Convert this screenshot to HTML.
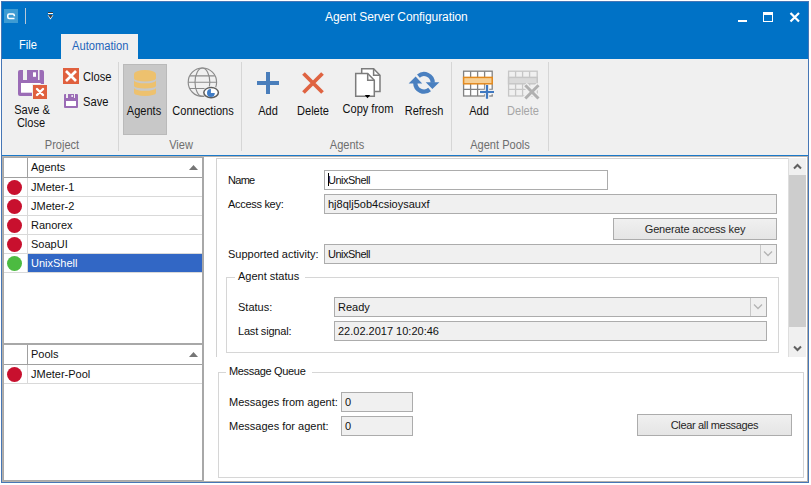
<!DOCTYPE html>
<html><head><meta charset="utf-8">
<style>
*{margin:0;padding:0;box-sizing:border-box}
html,body{width:811px;height:485px;overflow:hidden;background:#fff;font-family:"Liberation Sans",sans-serif;}
.a{position:absolute}
.t{position:absolute;white-space:nowrap;font-size:11px;line-height:13px;color:#111}
.c{position:absolute;white-space:nowrap;font-size:12px;line-height:13px;color:#111;width:120px;text-align:center;transform:scaleX(0.92)}
.r{font-size:12px;transform:scaleX(0.93);transform-origin:0 0}
.g{color:#6e6e6e}
.sep{position:absolute;width:1px;top:62px;height:89px;background:#d6d6d6}
.box{position:absolute;border:1px solid #acacac;background:#f0f0f0}
.btn{position:absolute;border:1px solid #acacac;background:linear-gradient(#f0f0f0,#e5e5e5);text-align:center;font-size:11px;line-height:21px;color:#262626}
.hl{position:absolute;background:#d9d9d9}
.vl{position:absolute;background:#d9d9d9;width:1px}
.dot{position:absolute;width:15px;height:15px;border-radius:50%;background:#c8102e;left:7px}
</style></head><body>
<!-- window frame -->
<div class="a" style="left:1px;top:1px;width:808px;height:482px;background:#0072c6;border:1px solid #4676b5"></div>
<!-- title bar -->
<div class="a" style="left:4px;top:9px;width:14px;height:14px;background:#3d9bd3"></div>
<svg class="a" style="left:4px;top:9px" width="14" height="14"><path d="M10.3 7.2 V6.4 Q10.3 5 8.9 5 H5.2 Q3.8 5 3.8 6.4 V8.1 Q3.8 9.5 5.2 9.5 H10.5" fill="none" stroke="#fff" stroke-width="1.6"/></svg>
<div class="a" style="left:25px;top:8px;width:1px;height:16px;background:#b8c8d8"></div>
<svg class="a" style="left:47px;top:12px" width="8" height="9"><rect x="1" y="0" width="5" height="1" fill="#3a3a3a"/><rect x="1" y="1" width="5" height="1" fill="#fff"/><path d="M0.6 3 H6.4 L3.5 7.4Z" fill="#fff"/><path d="M1.2 3 H5.8 L3.5 6.2Z" fill="#3a3a3a"/></svg>
<div class="t" style="left:325px;top:10px;font-size:12px;line-height:14px;color:#fff;letter-spacing:-0.08px">Agent Server Configuration</div>
<div class="a" style="left:738px;top:20px;width:9px;height:2px;background:#fff"></div>
<div class="a" style="left:763px;top:12px;width:10px;height:10px;border:1px solid #fff;border-top-width:3px"></div>
<svg class="a" style="left:789px;top:12px" width="12" height="11"><path d="M1.5 1 L10 9.5 M10 1 L1.5 9.5" stroke="#fff" stroke-width="2.2"/></svg>
<!-- tabs -->
<div class="t r" style="left:19px;top:39px;color:#fff">File</div>
<div class="a" style="left:61px;top:34px;width:77px;height:25px;background:#f0f0f0"></div>
<div class="t r" style="left:72px;top:40px;color:#1e64ba">Automation</div>
<!-- ribbon -->
<div class="a" style="left:2px;top:59px;width:806px;height:96px;background:#f0f0f0"></div>
<div class="sep" style="left:118px"></div>
<div class="sep" style="left:241px"></div>
<div class="sep" style="left:451px"></div>
<div class="sep" style="left:548px"></div>

<!-- Save & Close icon -->
<svg class="a" style="left:18px;top:70px" width="30" height="30">
<rect x="0" y="0" width="26" height="26" rx="2" fill="#9b6cb6"/>
<rect x="5" y="0" width="4" height="10" fill="#f0f0f0"/>
<rect x="20" y="0" width="1.5" height="10" fill="#f0f0f0"/>
<rect x="15" y="2.3" width="3" height="4.5" fill="#fff"/>
<rect x="3" y="13" width="19.7" height="9.7" fill="#fff"/>
<rect x="14" y="14" width="16" height="16" fill="#f0f0f0"/>
<rect x="15" y="15" width="14" height="14" fill="#e0603e"/>
<path d="M19 19 L25 25 M25 19 L19 25" stroke="#fff" stroke-width="2.4" stroke-linecap="round"/>
</svg>
<div class="c" style="left:-28px;top:104px">Save &amp;</div>
<div class="c" style="left:-29px;top:117px">Close</div>
<!-- Close small -->
<svg class="a" style="left:63px;top:68px" width="16" height="16">
<rect width="16" height="16" fill="#e0603e"/>
<path d="M3 3 L13 13 M13 3 L3 13" stroke="#fff" stroke-width="2.7"/>
</svg>
<div class="t r" style="left:83px;top:71px">Close</div>
<!-- Save small -->
<svg class="a" style="left:64px;top:94px" width="14" height="14">
<rect width="14" height="14" rx="1" fill="#9b6cb6"/>
<rect x="2" y="0" width="2" height="4" fill="#f0f0f0"/>
<rect x="10" y="0" width="1" height="4" fill="#f0f0f0"/>
<rect x="7.5" y="1" width="1.3" height="2" fill="#fff"/>
<rect x="2" y="7" width="10" height="5" fill="#fff"/>
</svg>
<div class="t r" style="left:83px;top:96px">Save</div>
<div class="c g" style="left:2px;top:139px">Project</div>

<!-- Agents (selected) -->
<div class="a" style="left:123px;top:64px;width:44px;height:71px;background:#c8c8c8;border:1px solid #bababa"></div>
<svg class="a" style="left:134px;top:70px" width="22" height="26">
<path d="M0 4 A11 4 0 0 1 22 4 V8.5 A11 3 0 0 1 0 8.5 Z M0 10.3 A11 3 0 0 0 22 10.3 V16 A11 2.5 0 0 1 0 16 Z M0 17.8 A11 3 0 0 0 22 17.8 V23 A11 3 0 0 1 0 23 Z" fill="#edc16e"/>
</svg>
<div class="c" style="left:84px;top:105px">Agents</div>
<!-- Connections -->
<svg class="a" style="left:186px;top:66px" width="36" height="36">
<g fill="none" stroke="#8a8a8a" stroke-width="1.15">
<circle cx="16.4" cy="16.2" r="14.2"/>
<ellipse cx="16.4" cy="16.2" rx="7.4" ry="14.2"/>
<path d="M4 9.9 H28.8 M2.2 16.2 H30.6 M4 22.5 H28.8"/>
</g>
<ellipse cx="25.1" cy="26.6" rx="8.6" ry="6.4" fill="#f0f0f0"/>
<ellipse cx="25.1" cy="26.6" rx="7.3" ry="5.1" fill="#fff" stroke="#5e5e5e" stroke-width="1.5"/>
<path d="M24.9 27 V23.1 A3.9 3.9 0 1 0 28.8 27 Z" fill="#3f7cc6"/>
</svg>
<div class="c" style="left:143px;top:105px">Connections</div>
<div class="c g" style="left:121px;top:139px">View</div>

<!-- Add -->
<svg class="a" style="left:257px;top:72px" width="22" height="22"><path d="M11 0 V22 M0 11 H22" stroke="#4a7ebb" stroke-width="4"/></svg>
<div class="c" style="left:208px;top:105px">Add</div>
<!-- Delete -->
<svg class="a" style="left:302px;top:72px" width="22" height="22"><path d="M1.5 1.5 L20.5 20.5 M20.5 1.5 L1.5 20.5" stroke="#df6341" stroke-width="3.8"/></svg>
<div class="c" style="left:253px;top:105px">Delete</div>
<!-- Copy from -->
<svg class="a" style="left:354px;top:67px" width="28" height="32">
<path d="M7.7 1.7 H19.6 L26 8.2 V24.5 H7.7 Z" fill="#fff" stroke="#7c7c7c" stroke-width="1.5"/>
<path d="M19.6 1.7 V8.2 H26" fill="none" stroke="#7c7c7c" stroke-width="1.5"/>
<path d="M1.7 6.5 H13.7 L20.3 13.2 V29.2 H1.7 Z" fill="#fff" stroke="#7c7c7c" stroke-width="1.5"/>
<path d="M13.7 6.5 V13.2 H20.3" fill="none" stroke="#7c7c7c" stroke-width="1.5"/>
<path d="M10.8 28 H16.2 L13.5 31.2 Z" fill="#000"/>
</svg>
<div class="c" style="left:308px;top:103px">Copy from</div>
<!-- Refresh -->
<svg class="a" style="left:404px;top:66px" width="40" height="30">
<path d="M14.4 10.1 A8.7 8.7 0 0 1 28.7 16.8 M25.6 23.5 A8.7 8.7 0 0 1 11.3 16.8" fill="none" stroke="#4a80c0" stroke-width="4.3"/>
<path d="M21.7 16.3 H35.4 L28.4 23.1 Z M4.6 17.5 H18.2 L11.6 10.5 Z" fill="#4a80c0"/>
</svg>
<div class="c" style="left:364px;top:105px">Refresh</div>
<div class="c g" style="left:287px;top:139px">Agents</div>

<!-- Agent pool add -->
<svg class="a" style="left:462px;top:70px" width="34" height="30">
<g fill="none" stroke="#828282" stroke-width="1.3">
<rect x="1.6" y="1.2" width="28.6" height="24.8" fill="#fff"/>
<path d="M8.6 1.2 V26 M15.6 1.2 V26 M22.6 1.2 V26 M1.6 19.4 H30.2"/>
</g>
<rect x="1.6" y="7.4" width="28.6" height="6.4" fill="#f6cf95" stroke="#e38a1f" stroke-width="1.5"/>
<path d="M25 15 V28.7 M18 22 H32" stroke="#f0f0f0" stroke-width="4.4"/>
<path d="M25 15 V28.7 M18 22 H32" stroke="#3f78c0" stroke-width="2.2"/>
</svg>
<div class="c" style="left:419px;top:105px">Add</div>
<!-- Agent pool delete (disabled) -->
<svg class="a" style="left:507px;top:70px" width="34" height="30">
<g fill="none" stroke="#c6c6c6" stroke-width="1.3">
<rect x="1.6" y="1.2" width="28.6" height="24.8"/>
<path d="M8.6 1.2 V26 M15.6 1.2 V26 M22.6 1.2 V26 M1.6 19.4 H30.2"/>
</g>
<rect x="1.6" y="7.4" width="28.6" height="6.4" fill="#dadada" stroke="#c6c6c6" stroke-width="1.5"/>
<path d="M17.8 14.8 L32 29 M32 14.8 L17.8 29" stroke="#f0f0f0" stroke-width="5.6"/>
<path d="M18.3 15.3 L31.5 28.5 M31.5 15.3 L18.3 28.5" stroke="#b0b0b0" stroke-width="3"/>
</svg>
<div class="c g" style="left:463px;top:105px;color:#a6a6a6">Delete</div>
<div class="c g" style="left:440px;top:139px">Agent Pools</div>

<!-- content frame -->
<div class="a" style="left:2px;top:155px;width:806px;height:1px;background:#1b79c9"></div>
<div class="a" style="left:2px;top:156px;width:806px;height:326px;background:#fff;border:1px solid #b4b0ab;border-top-color:#b9b3ad"></div>
<!-- left panel -->
<div class="a" style="left:3px;top:157px;width:200px;height:324px;border:1px solid #a8a8a8"></div>
<div class="a" style="left:202px;top:157px;width:2px;height:324px;background:#a8a8a8"></div>
<!-- agents list header -->
<div class="a" style="left:4px;top:177px;width:198px;height:1px;background:#a0a0a0"></div>
<div class="a" style="left:27px;top:158px;width:1px;height:19px;background:#a0a0a0"></div>
<div class="t" style="left:31px;top:161px">Agents</div>
<svg class="a" style="left:189px;top:165px" width="9" height="5"><path d="M0 5 H9 L4.5 0Z" fill="#767676"/></svg>
<!-- rows -->
<div class="vl" style="left:27px;top:178px;height:94px"></div>
<div class="hl" style="left:4px;top:196px;width:198px;height:1px"></div>
<div class="hl" style="left:4px;top:215px;width:198px;height:1px"></div>
<div class="hl" style="left:4px;top:234px;width:198px;height:1px"></div>
<div class="hl" style="left:4px;top:253px;width:198px;height:1px"></div>
<div class="hl" style="left:4px;top:272px;width:198px;height:1px"></div>
<div class="a" style="left:28px;top:254px;width:174px;height:18px;background:#3267c5"></div>
<div class="dot" style="top:180px"></div>
<div class="dot" style="top:199px"></div>
<div class="dot" style="top:218px"></div>
<div class="dot" style="top:237px"></div>
<div class="dot" style="top:256px;background:#4cbb41"></div>
<div class="t" style="left:31px;top:181px">JMeter-1</div>
<div class="t" style="left:31px;top:200px">JMeter-2</div>
<div class="t" style="left:31px;top:219px">Ranorex</div>
<div class="t" style="left:31px;top:238px">SoapUI</div>
<div class="t" style="left:31px;top:257px;color:#fff">UnixShell</div>
<!-- splitter -->
<div class="a" style="left:4px;top:343px;width:198px;height:2px;background:#a8a8a8"></div>
<!-- pools header -->
<div class="a" style="left:4px;top:364px;width:198px;height:1px;background:#a0a0a0"></div>
<div class="a" style="left:27px;top:345px;width:1px;height:19px;background:#a0a0a0"></div>
<div class="t" style="left:31px;top:348px">Pools</div>
<svg class="a" style="left:189px;top:352px" width="9" height="5"><path d="M0 5 H9 L4.5 0Z" fill="#767676"/></svg>
<div class="vl" style="left:27px;top:365px;height:18px"></div>
<div class="hl" style="left:4px;top:383px;width:198px;height:1px"></div>
<div class="dot" style="top:367px"></div>
<div class="t" style="left:31px;top:368px">JMeter-Pool</div>

<!-- right: scroll panel -->
<div class="a" style="left:216px;top:158px;width:573px;height:199px;border-left:1px solid #d2d2d2;border-top:1px solid #d2d2d2"></div>
<!-- scrollbar -->
<div class="a" style="left:788px;top:158px;width:18px;height:199px;background:#f0f0f0;border-left:1px solid #dedede"></div>
<div class="a" style="left:789px;top:175px;width:17px;height:152px;background:#cdcdcd"></div>
<svg class="a" style="left:793px;top:162px" width="9" height="8"><path d="M1 6.5 L4.5 3 L8 6.5" fill="none" stroke="#606060" stroke-width="2"/></svg>
<svg class="a" style="left:793px;top:345px" width="9" height="8"><path d="M1 1.5 L4.5 5 L8 1.5" fill="none" stroke="#606060" stroke-width="2"/></svg>

<div class="t" style="left:228px;top:174px;letter-spacing:-0.7px">Name</div>
<div class="a" style="left:324px;top:170px;width:284px;height:20px;border:1px solid #acacac;background:#fff"></div>
<div class="a" style="left:328px;top:173px;width:1px;height:13px;background:#000"></div>
<div class="t" style="left:328px;top:174px;letter-spacing:-0.5px">UnixShell</div>
<div class="t" style="left:228px;top:198px;letter-spacing:-0.3px">Access key:</div>
<div class="box" style="left:324px;top:194px;width:453px;height:20px"></div>
<div class="t" style="left:328px;top:198px">hj8qlj5ob4csioysauxf</div>
<div class="btn" style="left:613px;top:218px;width:164px;height:22px;letter-spacing:-0.15px">Generate access key</div>
<div class="t" style="left:228px;top:248px">Supported activity:</div>
<div class="box" style="left:324px;top:244px;width:453px;height:20px"></div>
<div class="a" style="left:760px;top:245px;width:16px;height:18px;border-left:1px solid #c8c8c8"></div>
<svg class="a" style="left:763px;top:250px" width="10" height="7"><path d="M1 1.5 L5 5.5 L9 1.5" fill="none" stroke="#b4b4b4" stroke-width="1.3"/></svg>
<div class="t" style="left:328px;top:248px;letter-spacing:-0.5px">UnixShell</div>

<!-- agent status group -->
<div class="a" style="left:226px;top:277px;width:553px;height:76px;border:1px solid #d6d6d6"></div>
<div class="a" style="left:235px;top:270px;width:70px;height:14px;background:#fff"></div>
<div class="t" style="left:238px;top:270px">Agent status</div>
<div class="t" style="left:238px;top:301px">Status:</div>
<div class="box" style="left:334px;top:297px;width:433px;height:20px"></div>
<div class="a" style="left:750px;top:298px;width:16px;height:18px;border-left:1px solid #c8c8c8"></div>
<svg class="a" style="left:753px;top:303px" width="10" height="7"><path d="M1 1.5 L5 5.5 L9 1.5" fill="none" stroke="#b4b4b4" stroke-width="1.3"/></svg>
<div class="t" style="left:338px;top:301px">Ready</div>
<div class="t" style="left:238px;top:325px;letter-spacing:-0.2px">Last signal:</div>
<div class="box" style="left:334px;top:321px;width:433px;height:20px"></div>
<div class="t" style="left:338px;top:325px">22.02.2017 10:20:46</div>

<!-- message queue group -->
<div class="a" style="left:218px;top:372px;width:586px;height:106px;border:1px solid #d6d6d6"></div>
<div class="a" style="left:226px;top:365px;width:86px;height:14px;background:#fff"></div>
<div class="t" style="left:229px;top:365px;letter-spacing:-0.33px">Message Queue</div>
<div class="t" style="left:229px;top:396px">Messages from agent:</div>
<div class="box" style="left:341px;top:392px;width:72px;height:20px"></div>
<div class="t" style="left:345px;top:396px">0</div>
<div class="t" style="left:229px;top:420px">Messages for agent:</div>
<div class="box" style="left:341px;top:416px;width:72px;height:20px"></div>
<div class="t" style="left:345px;top:420px">0</div>
<div class="btn" style="left:637px;top:414px;width:155px;height:22px;letter-spacing:-0.33px">Clear all messages</div>
</body></html>
